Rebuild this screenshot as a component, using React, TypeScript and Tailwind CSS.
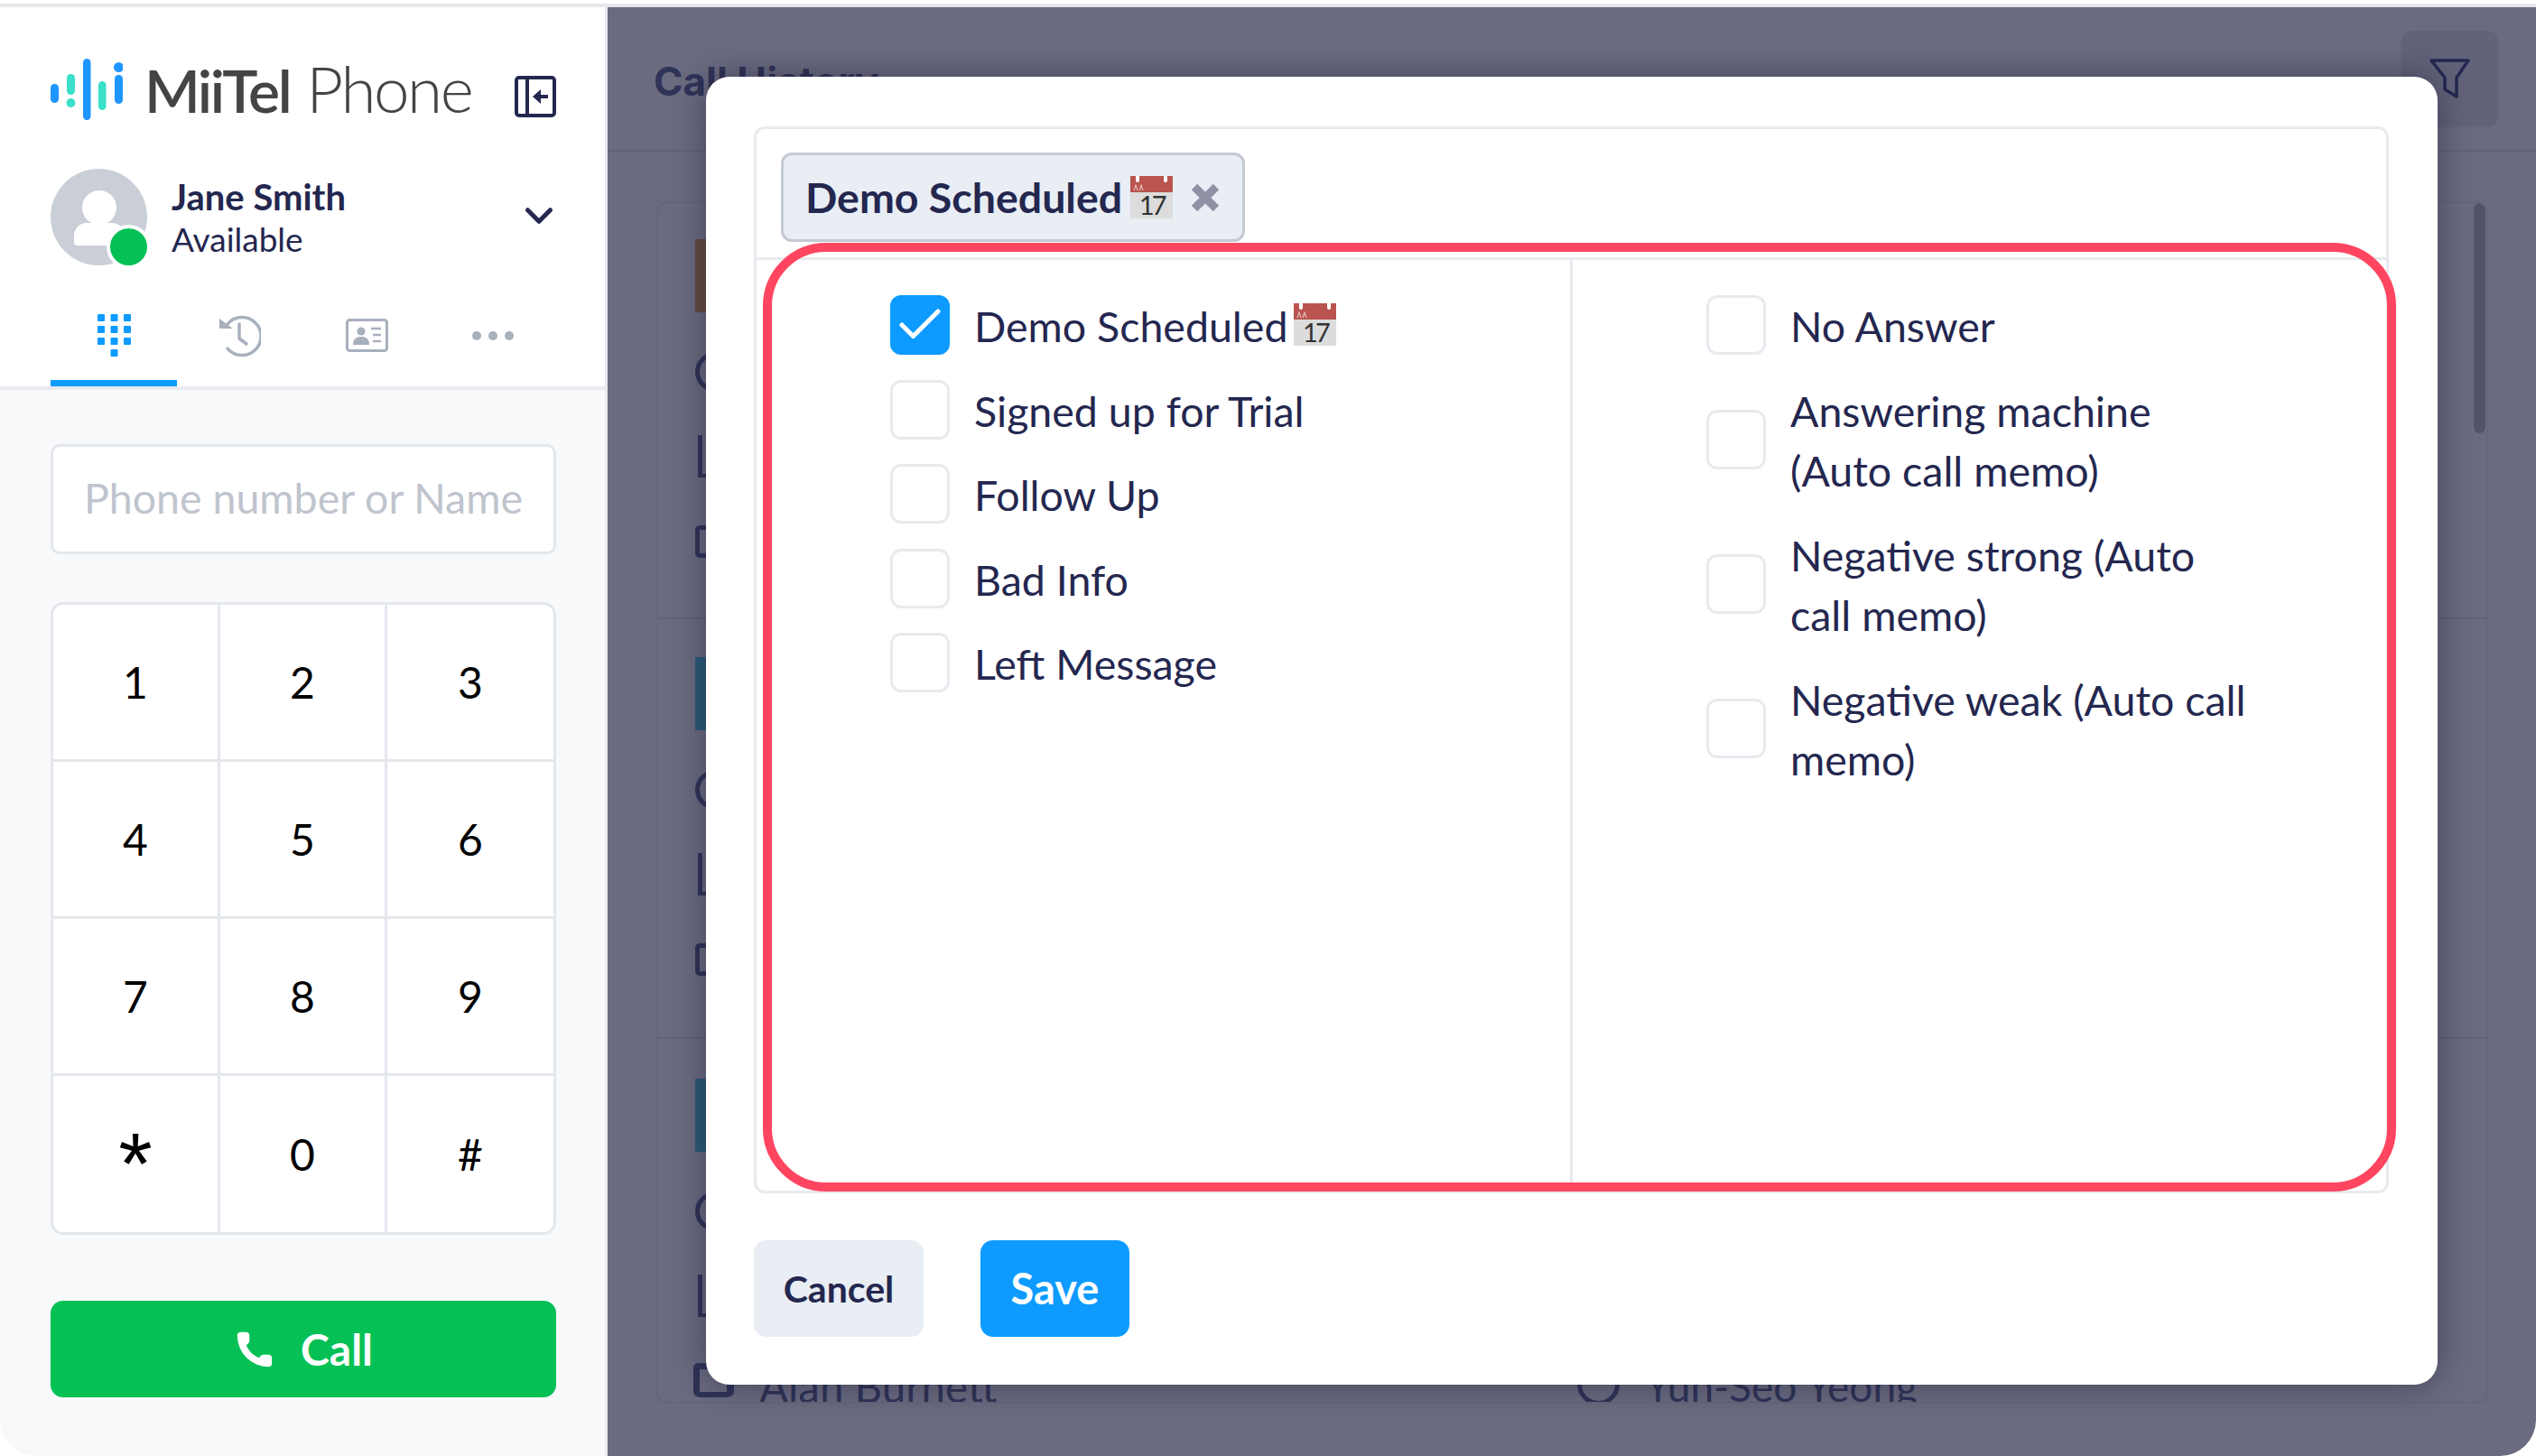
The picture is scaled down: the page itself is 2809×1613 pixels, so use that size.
import { Check, ChevronDown, Phone } from "lucide-react";

const LATO = "font-['Lato',sans-serif]";

function CalendarEmoji({ className = "" }: { className?: string }) {
  return (
    <span className={`inline-flex flex-col w-[47px] h-[47px] shrink-0 ${className}`}>
      <span className="relative h-[18px] bg-[#b9544f]">
        <span className="absolute left-[6px] top-0 w-[4px] h-[7px] bg-white rounded-b-full" />
        <span className="absolute right-[6px] top-0 w-[4px] h-[7px] bg-white rounded-b-full" />
        <svg width="18" height="8" viewBox="0 0 18 8" fill="none" className="absolute left-[3px] top-[9px]">
          <path d="M1 7l2-6 2 6M7 7l2-6 2 6" stroke="#e8b9b6" strokeWidth="1.2" />
        </svg>
      </span>
      <span className="flex-1 bg-[#dcdcdc] text-[#333333] text-[29px] leading-[28px] text-center tracking-[-3px] font-['Lato',sans-serif]">
        17
      </span>
    </span>
  );
}

function MiiTelMark() {
  return (
    <svg width="80" height="68" viewBox="56 65 80 68" className="shrink-0">
      <rect x="56" y="93" width="9" height="21" rx="4.5" fill="#1e96ff" />
      <rect x="74" y="82" width="9" height="23" rx="4.5" fill="#3ae0c8" />
      <circle cx="78.5" cy="114" r="5" fill="#3ae0c8" />
      <rect x="92" y="65" width="8.5" height="68" rx="4.25" fill="#1e96ff" />
      <rect x="109" y="90" width="8.5" height="32" rx="4.25" fill="#3ae0c8" />
      <rect x="127" y="83" width="9" height="32" rx="4.5" fill="#1e96ff" />
      <circle cx="131.5" cy="74.5" r="5.5" fill="#1e96ff" />
    </svg>
  );
}

function CollapseIcon() {
  return (
    <svg width="46" height="46" viewBox="0 0 46 46" fill="none" className="shrink-0">
      <rect x="2" y="2" width="42" height="42" rx="3" stroke="#232850" strokeWidth="4" />
      <path d="M14 2v42" stroke="#232850" strokeWidth="4" />
      <path d="M37 23H24" stroke="#232850" strokeWidth="4" />
      <path d="M29 15l-9 8 9 8z" fill="#232850" />
    </svg>
  );
}

function DialIcon() {
  const cells = [
    [0, 0], [14.5, 0], [29, 0],
    [0, 13], [14.5, 13], [29, 13],
    [0, 26], [14.5, 26], [29, 26],
    [14.5, 39],
  ];
  return (
    <svg width="37" height="47" viewBox="0 0 37 47">
      {cells.map(([x, y]) => (
        <rect key={`${x}-${y}`} x={x} y={y} width="8" height="8" rx="1" fill="#0d9bff" />
      ))}
    </svg>
  );
}

function HistoryIcon() {
  return (
    <svg width="46" height="47" viewBox="0 0 46 47" fill="none">
      <path d="M9 11A21 21 0 1 1 9 38" stroke="#a8b0bd" strokeWidth="3.5" strokeLinecap="round" />
      <path d="M0 5l15 11H0z" fill="#a8b0bd" />
      <path d="M22 11v16l8 6" stroke="#a8b0bd" strokeWidth="3.5" strokeLinecap="round" />
    </svg>
  );
}

function CardIcon() {
  return (
    <svg width="47" height="37" viewBox="0 0 47 37" fill="none">
      <rect x="1.5" y="1.5" width="44" height="34" rx="3" stroke="#a8b0bd" strokeWidth="3" />
      <circle cx="17" cy="14" r="4.5" fill="#a8b0bd" />
      <path d="M8 29c0-7 4-9 9-9s9 2 9 9z" fill="#a8b0bd" />
      <path d="M28 11h11M30 18h9M30 25h9" stroke="#a8b0bd" strokeWidth="2.5" />
    </svg>
  );
}

function FilterIcon() {
  return (
    <svg width="47" height="47" viewBox="0 0 47 47" fill="none">
      <path
        d="M3 3h41L31 22v21l-13-8V22z"
        stroke="#232850"
        strokeWidth="3.5"
        strokeLinejoin="round"
      />
    </svg>
  );
}

function Row({ label, emoji, checked }: { label: string; emoji?: boolean; checked?: boolean }) {
  return (
    <div className="flex items-center gap-[27px]">
      <span
        className={`flex items-center justify-center w-[66px] h-[66px] shrink-0 rounded-[12px] border-[3px] ${
          checked ? "bg-[#0d9bff] border-[#0d9bff]" : "bg-white border-[#e8eaef]"
        }`}
      >
        {checked && <Check className="w-[62px] h-[62px] text-white" strokeWidth={2} />}
      </span>
      <span className="flex items-center gap-[7px] max-w-[512px] pt-[1px] -mb-[1px] text-[46.5px] leading-[66px] text-[#24274f]">
        {label}
        {emoji && <CalendarEmoji className="-mt-[4px]" />}
      </span>
    </div>
  );
}

// left edge of a call card, mostly hidden by the dialog
function CardPeek({ accent }: { accent: string }) {
  return (
    <div className="flex flex-col items-start">
      <div className={`w-[12px] h-[81px] ${accent}`} />
      <div className="mt-[44px] w-[44px] h-[44px] rounded-full border-[5px] border-[#2f3357]" />
      <div className="mt-[48px] ml-[3px] w-[20px] h-[47px] border-l-[5px] border-b-[4px] border-[#2f3357]" />
      <div className="mt-[53px] w-[40px] h-[36px] rounded-[5px] border-[5px] border-[#2f3357]" />
    </div>
  );
}

const KEYS = ["1", "2", "3", "4", "5", "6", "7", "8", "9", "*", "0", "#"];

export default function App() {
  return (
    <div className={`${LATO} relative w-[2809px] h-[1613px] overflow-hidden bg-white pt-[4px]`}>
      <div className="h-[4px] bg-[#e6e8ec]" />
      <div className="flex h-[1605px]">
        {/* sidebar */}
        <aside className="flex flex-col w-[673px] shrink-0 bg-[#f8f9fb] rounded-bl-[40px] border-r-[3px] border-[#e9eaee]">
          <div className="bg-white h-[424px] border-b-[4px] border-[#e9ebef] pl-[56px] pr-[54px] flex flex-col">
            <div className="flex items-center mt-[57px] h-[68px]">
              <MiiTelMark />
              <span className="ml-[24px] -mt-[4px] leading-none text-[#444444] whitespace-nowrap">
                <span className="text-[66px] tracking-[-2.5px] font-semibold">MiiTel</span>{" "}
                <span className="ml-[14px] text-[71px] tracking-[-2.5px] font-light">Phone</span>
              </span>
              <div className="ml-auto mt-[15px]">
                <CollapseIcon />
              </div>
            </div>
            <div className="flex items-center mt-[54px]">
              <div className="relative w-[107px] h-[107px] rounded-full bg-[#c9ced7] shrink-0">
                <span className="absolute left-[35px] top-[24px] w-[38px] h-[38px] rounded-full bg-white" />
                <span className="absolute left-[26px] top-[60px] w-[56px] h-[25px] rounded-t-[14px] rounded-b-[4px] bg-white" />
                <span className="absolute left-[62px] top-[62px] w-[49px] h-[49px] rounded-full bg-[#05c155] border-[4px] border-white" />
              </div>
              <div className="ml-[27px] flex flex-col text-[#24274f]">
                <span className="text-[40px] leading-[48px] font-bold">Jane Smith</span>
                <span className="text-[37px] leading-[46px]">Available</span>
              </div>
              <ChevronDown className="ml-auto w-[50px] h-[50px] text-[#24274f] -mr-[6px] -mt-[3px]" strokeWidth={2.4} />
            </div>
            <div className="flex mt-auto h-[87px]">
              <div className="flex items-center justify-center w-[140px] border-b-[7px] border-[#0d9bff] pb-[19px]">
                <DialIcon />
              </div>
              <div className="flex items-center justify-center w-[140px] pb-[26px]">
                <HistoryIcon />
              </div>
              <div className="flex items-center justify-center w-[140px] pb-[26px]">
                <CardIcon />
              </div>
              <div className="flex items-center justify-center gap-[8px] w-[140px] pb-[26px]">
                <span className="w-[10px] h-[10px] rounded-full bg-[#a8b0bd]" />
                <span className="w-[10px] h-[10px] rounded-full bg-[#a8b0bd]" />
                <span className="w-[10px] h-[10px] rounded-full bg-[#a8b0bd]" />
              </div>
            </div>
          </div>
          <div className="flex-1 pl-[56px] pr-[54px] pt-[60px]">
            <div className="flex items-center justify-center h-[122px] pb-[3px] bg-white border-[3px] border-[#e4e7ec] rounded-[10px] text-[46.5px] text-[#bfc4cd]">
              Phone number or Name
            </div>
            <div className="grid grid-cols-[185px_185px_1fr] grid-rows-[174px_174px_174px_1fr] h-[701px] mt-[53px] bg-white border-[3px] border-[#e4e7ec] rounded-[14px] text-[48px] text-black">
              {KEYS.map((k, i) => (
                <div
                  key={k}
                  className={`flex items-center justify-center ${i % 3 !== 2 ? "border-r-[3px] border-[#e4e7ec]" : ""} ${
                    i < 9 ? "border-b-[3px] border-[#e4e7ec]" : ""
                  }`}
                >
                  {k === "*" ? <span className="text-[96px] leading-none mt-[45px] font-['Liberation_Mono',monospace]">*</span> : k}
                </div>
              ))}
            </div>
            <div className="flex items-center justify-center gap-[28px] h-[107px] mt-[73px] bg-[#05c155] rounded-[14px] text-white text-[48px] font-bold">
              <Phone className="w-[46px] h-[46px] fill-white" strokeWidth={0} />
              Call
            </div>
          </div>
        </aside>

        {/* call history behind the dialog */}
        <main className="relative flex-1 flex flex-col bg-[#6a6a80] rounded-br-[40px] overflow-hidden">
          <div className="flex items-center justify-between h-[160px] border-b-[2px] border-[#62637a] pl-[51px] pr-[42px] shrink-0">
            <span className="text-[44px] font-bold text-[#2f3357] mt-[5px] font-['Inter',sans-serif]">Call History</span>
            <div className="flex items-center justify-center w-[107px] h-[107px] rounded-[12px] bg-[#62637a]">
              <FilterIcon />
            </div>
          </div>
          <div className="flex flex-1 pl-[54px] pr-[53px] pt-[55px]">
            <div className="relative flex-1 h-[1332px] overflow-hidden border-[2px] border-[#65657b] rounded-[12px]">
              <div className="h-[461px] border-b-[2px] border-[#62637a] pl-[41px] pt-[40px]">
                <CardPeek accent="bg-[#664a40]" />
              </div>
              <div className="h-[465px] border-b-[2px] border-[#62637a] pl-[41px] pt-[42px]">
                <CardPeek accent="bg-[#2a5a78]" />
              </div>
              <div className="pl-[41px] pt-[44px]">
                <CardPeek accent="bg-[#2a5a78]" />
              </div>
              <span className="absolute left-[112px] top-[1281px] text-[47.5px] leading-[60px] text-[#2f3357]">Alan Burnett</span>
              <span className="absolute left-[1093px] top-[1281px] text-[46px] leading-[60px] text-[#2f3357]">Yun-Seo Yeong</span>
              <div className="absolute left-[39px] top-[1285px] w-[45px] h-[37px] rounded-[5px] border-[5px] border-[#2f3357]" />
              <div className="absolute left-[1018px] top-[1285px] w-[47px] h-[47px] rounded-full border-[5px] border-[#2f3357]" />
              <div className="absolute right-[1px] top-0 w-[13px] h-[255px] rounded-full bg-[#525268]" />
            </div>
          </div>
        </main>
      </div>

      {/* dialog */}
      <div className="absolute left-[782px] top-[85px] w-[1918px] h-[1449px] flex flex-col bg-white rounded-[26px] shadow-[0_0_36px_rgba(20,20,40,0.45)] pl-[53px] pr-[54px] pt-[55px]">
        <div className="flex flex-col h-[1182px] border-[3px] border-[#e8eaef] rounded-[12px]">
          <div className="h-[145px] border-b-[3px] border-[#e8eaef] pl-[27px] pt-[26px] shrink-0">
            <div className="flex items-center w-[514px] h-[99px] pl-[24px] bg-[#e9edf4] border-[3px] border-[#c5c9d3] rounded-[12px]">
              <span className="text-[46.5px] font-bold text-[#24274f] whitespace-nowrap">Demo Scheduled</span>
              <CalendarEmoji className="ml-[9px]" />
              <svg width="34" height="34" viewBox="0 0 34 34" className="ml-[19px]">
                <path d="M5 5l24 24M29 5L5 29" stroke="#8f92a5" strokeWidth="9" />
              </svg>
            </div>
          </div>
          <div className="flex flex-1">
            <div className="w-[904px] border-r-[3px] border-[#e8eaef] pl-[148px] pt-[39px] flex flex-col gap-[27.5px]">
              <Row label="Demo Scheduled" emoji checked />
              <Row label="Signed up for Trial" />
              <Row label="Follow Up" />
              <Row label="Bad Info" />
              <Row label="Left Message" />
            </div>
            <div className="flex-1 pl-[148px] pt-[39px] flex flex-col gap-[28px]">
              <Row label="No Answer" />
              <Row label="Answering machine (Auto call memo)" />
              <Row label="Negative strong (Auto call memo)" />
              <Row label="Negative weak (Auto call memo)" />
            </div>
          </div>
        </div>
        <div className="flex items-center gap-[63px] mt-[52px]">
          <button className="w-[188px] h-[107px] rounded-[14px] bg-[#e9edf4] text-[41px] font-bold text-[#24274f]">Cancel</button>
          <button className="w-[165px] h-[107px] rounded-[14px] bg-[#0d9bff] text-[47px] font-bold text-white">Save</button>
        </div>
      </div>

      {/* red highlight */}
      <div className="absolute left-[845px] top-[269px] w-[1809px] h-[1051px] border-[10px] border-[#ff4560] rounded-[70px] pointer-events-none" />
    </div>
  );
}
